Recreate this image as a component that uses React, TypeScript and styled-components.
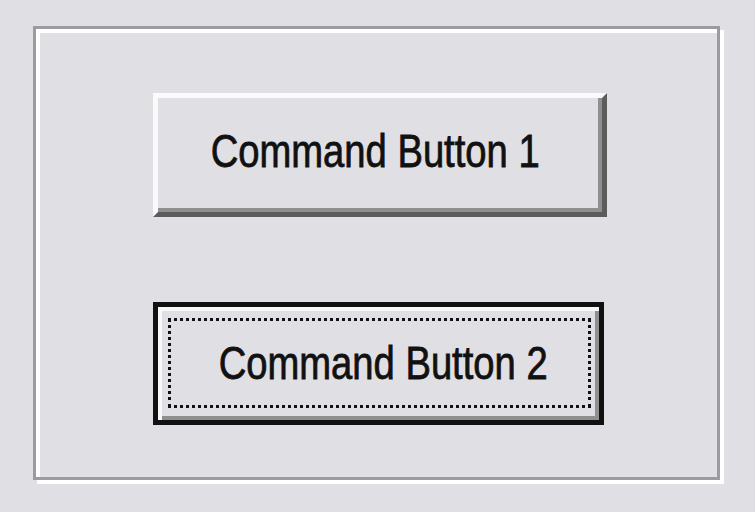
import React from "react";
import styled, { createGlobalStyle } from "styled-components";

const Global = createGlobalStyle`
  html, body {
    margin: 0;
    padding: 0;
    background: #e0dfe3;
  }
  body {
    font-family: "Liberation Sans", Arial, sans-serif;
  }
`;

const Page = styled.div`
  width: 755px;
  height: 512px;
  box-sizing: border-box;
  padding: 26px 0 0 33px;
  background: #e0dfe3;
`;

const Frame = styled.div`
  box-sizing: border-box;
  width: 687px;
  height: 454px;
  border: 3px solid #9c9ca0;
  box-shadow: inset 4px 4px 0 #ffffff, 4px 4px 0 #ffffff;
  display: flex;
  flex-direction: column;
  align-items: flex-start;
  gap: 85px;
  padding: 64px 0 0 117px;
`;

const Label = styled.span`
  display: inline-block;
  font-family: "Liberation Sans", Arial, sans-serif;
  font-size: 46px;
  line-height: 1.15;
  color: #111;
  -webkit-text-stroke: 0.8px #111;
  white-space: nowrap;
  transform: scaleX(0.83);
`;

const Button = styled.button<{ $padLeft: number; $padRight: number }>`
  box-sizing: border-box;
  width: 454px;
  height: 124px;
  margin: 0;
  background: #e0dfe3;
  border: 5px solid;
  border-color: #fafafa #5c5c5c #5c5c5c #fafafa;
  box-shadow: inset -4px -4px 0 #8f8f8f;
  display: flex;
  align-items: center;
  justify-content: center;
  padding: 0 ${(p) => p.$padRight}px 7px ${(p) => p.$padLeft}px;
  font: inherit;
  cursor: default;
`;

const DefaultButton = styled.button`
  box-sizing: border-box;
  width: 451px;
  height: 123px;
  margin: 0;
  background: #e0dfe3;
  border: 5px solid #111111;
  box-shadow: inset 4px 4px 0 #f8f8f8, inset -4px -4px 0 #8f8f8f;
  display: flex;
  align-items: stretch;
  padding: 11px 8px 12px 10px;
  font: inherit;
  cursor: default;
`;

const FocusRing = styled.span`
  flex: 1;
  box-sizing: border-box;
  border: 3px dotted #111111;
  display: flex;
  align-items: center;
  justify-content: center;
  padding-left: 8px;
`;

export default function App() {
  return (
    <>
      <Global />
      <Page>
        <Frame>
          <Button $padLeft={0} $padRight={10}>
            <Label>Command Button 1</Label>
          </Button>
          <DefaultButton>
            <FocusRing>
              <Label>Command Button 2</Label>
            </FocusRing>
          </DefaultButton>
        </Frame>
      </Page>
    </>
  );
}
